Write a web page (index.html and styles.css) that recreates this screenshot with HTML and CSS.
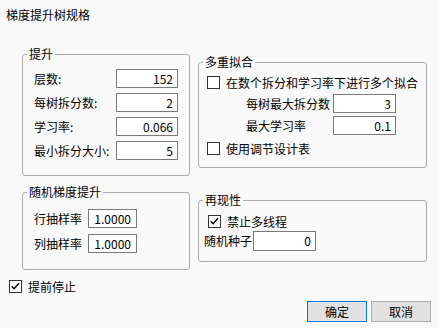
FILE: index.html
```html
<!DOCTYPE html>
<html lang="zh">
<head>
<meta charset="utf-8">
<title>梯度提升树规格</title>
<link rel="stylesheet" href="styles.css">
</head>
<body>
<div class="dialog">
  <div class="title">梯度提升树规格</div>
  <div class="grid">
    <fieldset class="panel">
      <legend>提升</legend>
      <div class="body body-boost">
        <span class="lbl">层数:</span><span class="field">152</span>
        <span class="lbl">每树拆分数:</span><span class="field">2</span>
        <span class="lbl">学习率:</span><span class="field">0.066</span>
        <span class="lbl">最小拆分大小:</span><span class="field">5</span>
      </div>
    </fieldset>
    <fieldset class="panel">
      <legend>多重拟合</legend>
      <div class="body body-multi">
        <div class="check"><span class="box"></span><span>在数个拆分和学习率下进行多个拟合</span></div>
        <div class="subform">
          <span class="lbl">每树最大拆分数</span><span class="field">3</span>
          <span class="lbl">最大学习率</span><span class="field">0.1</span>
        </div>
        <div class="check check-last"><span class="box"></span><span>使用调节设计表</span></div>
      </div>
    </fieldset>
    <fieldset class="panel">
      <legend>随机梯度提升</legend>
      <div class="body body-sgb">
        <span class="lbl">行抽样率</span><span class="field">1.0000</span>
        <span class="lbl">列抽样率</span><span class="field">1.0000</span>
      </div>
    </fieldset>
    <fieldset class="panel">
      <legend>再现性</legend>
      <div class="body body-repro">
        <div class="check check-indent"><span class="box"><svg viewBox="0 0 13 13" width="11" height="11"><path d="M2 6.2 L4.8 9.2 L10.6 2.6" fill="none" stroke="#000" stroke-width="1.7"/></svg></span><span>禁止多线程</span></div>
        <div class="seed"><span class="lbl">随机种子</span><span class="field seed-field">0</span></div>
      </div>
    </fieldset>
  </div>
  <div class="check early"><span class="box"><svg viewBox="0 0 13 13" width="11" height="11"><path d="M2 6.2 L4.8 9.2 L10.6 2.6" fill="none" stroke="#000" stroke-width="1.7"/></svg></span><span>提前停止</span></div>
  <div class="buttons">
    <button class="btn primary">确定</button>
    <button class="btn">取消</button>
  </div>
</div>
</body>
</html>
```
FILE: styles.css
```css
* { box-sizing: border-box; }
html, body { margin: 0; }
body {
  background: #f9f9f9;
  font-family: "Noto Sans CJK SC", "Microsoft YaHei", sans-serif;
  font-size: 12px;
  color: #000;
  width: 438px;
  height: 328px;
  overflow: hidden;
}
.dialog { padding: 7px 7px 0 0; }
.title { line-height: 16px; padding-left: 6px; }

.grid {
  display: grid;
  grid-template-columns: 168px 229px;
  column-gap: 8px;
  row-gap: 8px;
  align-items: center;
  margin: 23px 0 0 22px;
}
.panel {
  margin: 0;
  padding: 0;
  border: 1px solid #ababab;
  border-radius: 3px;
  min-width: 0;
}
.panel legend {
  margin-left: 4px;
  padding: 0 2px;
  line-height: 16px;
}
.lbl { line-height: 16px; white-space: nowrap; }
.field {
  display: block;
  height: 19px;
  border: 1px solid #7a7a7a;
  background: #fff;
  text-align: right;
  padding-right: 4px;
  line-height: 17px;
}

.body-boost {
  display: grid;
  grid-template-columns: 1fr 62px;
  row-gap: 5px;
  align-items: center;
  padding: 7px 11px 15px 11px;
}
.body-multi {
  display: flex;
  flex-direction: column;
  padding: 6px 0 12px 8px;
}
.subform {
  display: grid;
  grid-template-columns: 87px 63px;
  row-gap: 3px;
  align-items: center;
  margin: 5px 0 0 39px;
}
.check-last { margin-top: 7px; }
.body-sgb {
  display: grid;
  grid-template-columns: 54px 49px;
  row-gap: 6px;
  align-items: center;
  padding: 9px 11px 16px 11px;
}
.body-sgb .field { padding-right: 5px; }
.body-repro {
  display: flex;
  flex-direction: column;
  padding: 7px 0 10px 5px;
}
.check-indent { margin-left: 4px; }
.seed { display: flex; align-items: center; margin-top: 3px; gap: 1px; }
.seed-field { width: 63px; height: 20px; line-height: 18px; }

.check {
  display: flex;
  align-items: center;
  gap: 6px;
  height: 13px;
  line-height: 13px;
  white-space: nowrap;
}
.box {
  width: 13px;
  height: 13px;
  flex: none;
  border: 1px solid #333;
  background: #fff;
  display: flex;
  align-items: center;
  justify-content: center;
}
.box svg { display: block; }
.early { margin: 10px 0 0 9px; }

.buttons {
  display: flex;
  justify-content: flex-end;
  gap: 4px;
  margin-top: 8px;
}
.btn {
  width: 60px;
  height: 21px;
  padding: 0;
  margin: 0;
  font: inherit;
  line-height: 19px;
  color: #000;
  background: #e1e1e1;
  border: 1px solid #adadad;
  border-radius: 0;
}
.btn.primary { border-color: #0078d7; }
```
